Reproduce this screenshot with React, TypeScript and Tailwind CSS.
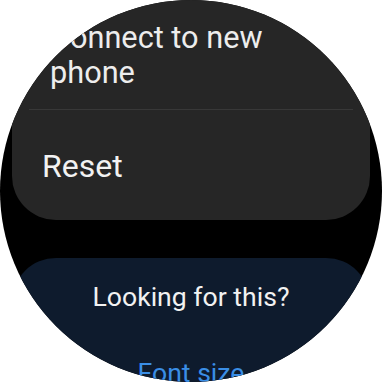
import React from "react";

export default function App() {
  return (
    <div className="w-[382px] h-[382px] bg-white" style={{ fontFamily: "Roboto, 'Noto Sans', sans-serif" }}>
      <div className="w-[382px] h-[382px] rounded-full bg-black overflow-hidden flex flex-col">
        <div className="mx-[12px] bg-[#262626] rounded-b-[44px] pt-[20px] pb-[35px] shrink-0">
          <div className="pl-[38px] pr-[20px] text-[30.7px] leading-[35px] text-[#ededed]">
            Connect to new
            <br />
            phone
          </div>
          <div className="mt-[19px] mx-[17px] h-px bg-[#383838]" />
          <div className="mt-[37px] pl-[30px] text-[32px] leading-[38px] text-[#f2f2f2]">Reset</div>
        </div>
        <div className="mt-[38px] mx-[12px] bg-[#0e1b2d] rounded-t-[44px] pt-[23px] flex-1 flex flex-col items-center shrink-0">
          <div className="text-[26.6px] leading-[31px] text-[#f2f2f2]">Looking for this?</div>
          <div className="mt-[46px] text-[26.6px] leading-[30px] text-[#3a8ee6]">Font size</div>
        </div>
      </div>
    </div>
  );
}
